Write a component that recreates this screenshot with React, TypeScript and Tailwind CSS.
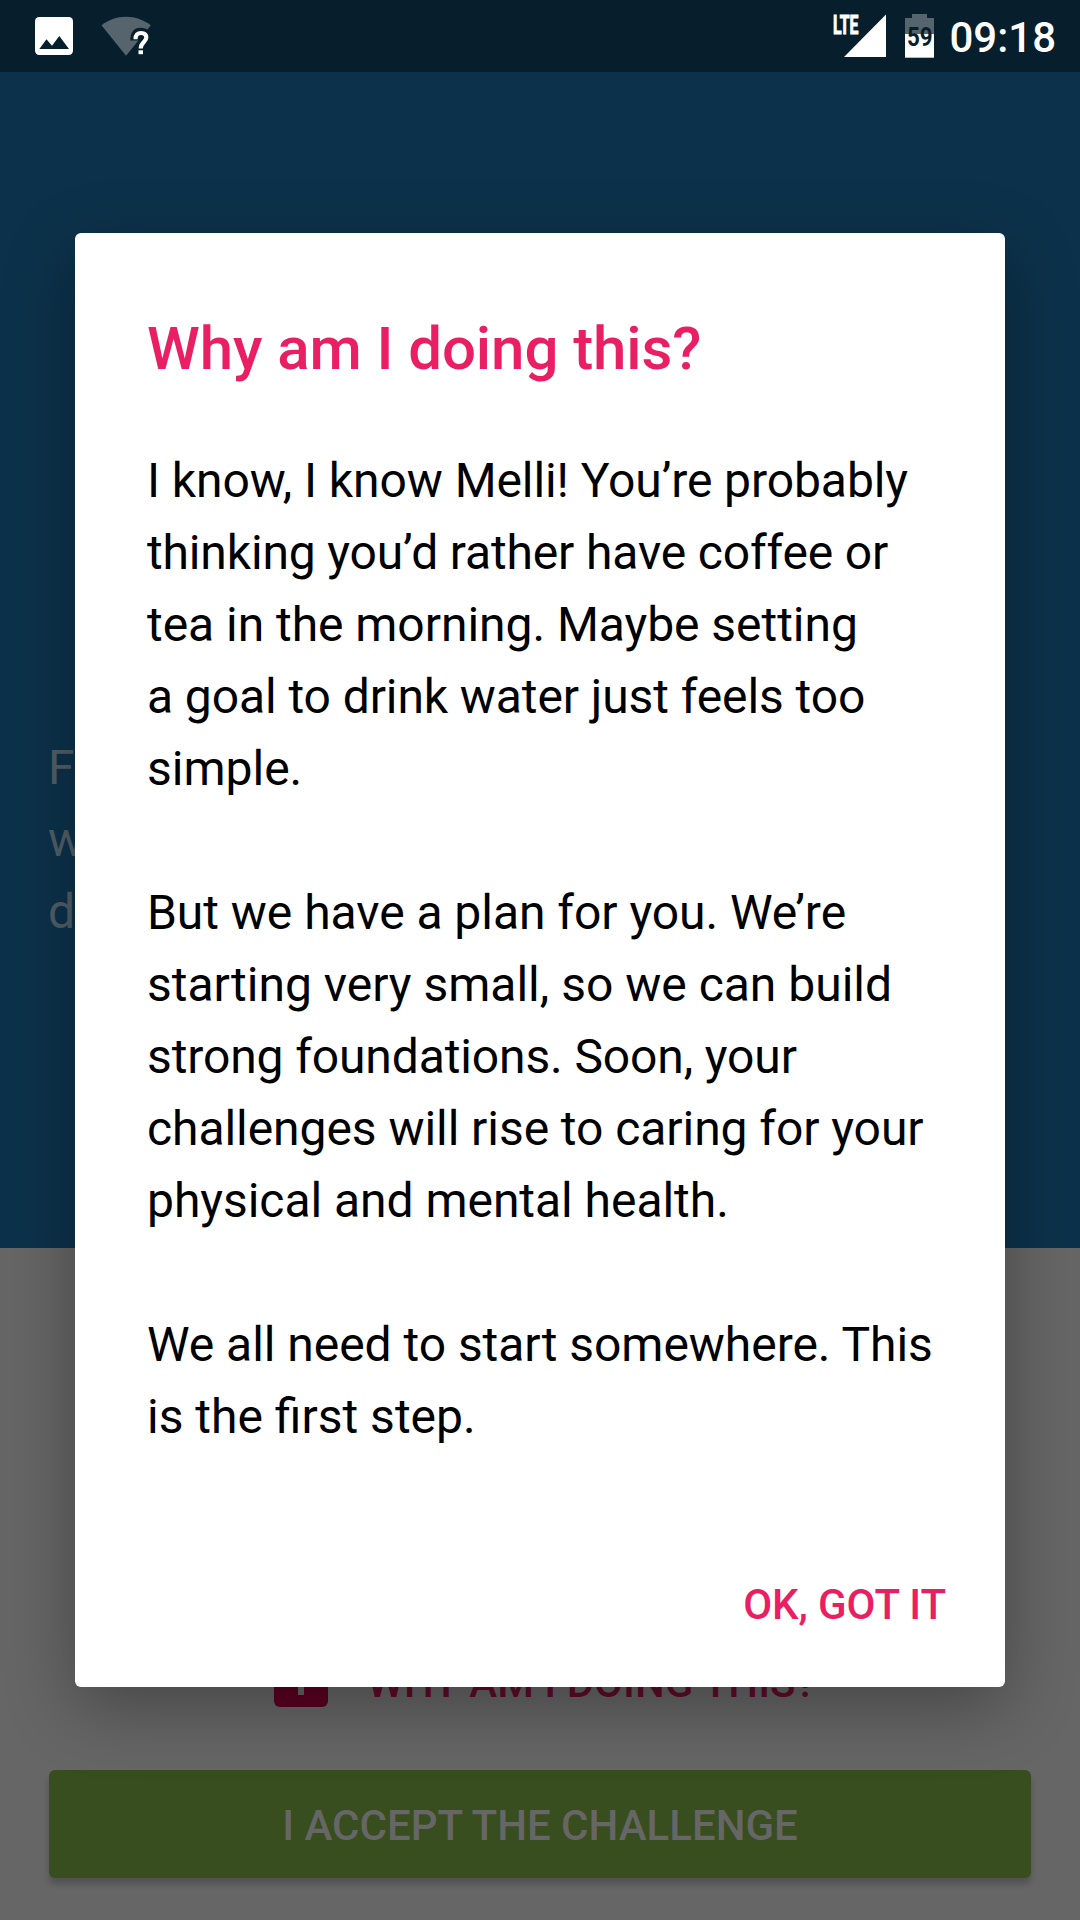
import React from "react";

function StatusBar() {
  return (
    <header className="flex h-[72px] shrink-0 items-start bg-[#071f2c] pl-[35px] text-white">
      <svg className="mt-[17px] h-[38px] w-[38px]" viewBox="0 0 38 38">
        <rect width="38" height="38" rx="4.2" fill="#fff" />
        <path d="M4.3 32 11.5 22.2 17 28.7 24.3 19 34 32Z" fill="#071f2c" />
      </svg>
      <svg className="ml-[28px] mt-[16px] h-[40px] w-[52px]" viewBox="0 0 52 40">
        <path d="M.5 9.3C7.5 4 15.500 .8 25 .8S42.500 4 49.800 9.300L25 39.700Z" fill="#55646d" />
        <path d="M34.300 24.500C34.300 18.500 36.500 16.800 40 16.800C44 16.800 45.400 18.600 45.400 21.300C45.400 27 39.800 26.500 39.800 32.500M39.800 34V38" fill="none" stroke="#071f2c" strokeWidth="10" />
        <path d="M34.500 23.200C34.500 19 36.700 17 40 17C43.700 17 45.300 19 45.300 21.600C45.300 26 39.700 26.300 39.700 32.500" fill="none" stroke="#fff" strokeWidth="4.200" />
        <path d="M37.500 34.300H42V38.200H37.500Z" fill="#fff" />
      </svg>
      <div className="ml-auto mr-[24px] flex items-start">
        <div className="relative mt-[14px] h-[44px] w-[54px]">
          <svg className="h-[44px] w-[54px]" viewBox="0 0 54 44">
            <path d="M12 43 54 .5V43Z" fill="#fff" />
          </svg>
          <span className="absolute left-[1px] top-[1px] origin-left scale-x-[0.62] text-[25.500px] font-bold leading-[20px] [-webkit-text-stroke:1px_white]">LTE</span>
        </div>
        <div className="relative ml-[19px] mt-[14px] h-[44px] w-[29px]">
          <svg className="h-[44px] w-[29px]" viewBox="0 0 29 44">
            <path d="M0 4H7V0H22V4H29V20H0Z" fill="#55646d" />
            <path d="M0 20H29V43.700H0Z" fill="#fff" />
          </svg>
          <span className="absolute left-[2px] top-[13px] origin-left scale-x-[0.860] text-[26px] font-bold leading-[20px] text-[#071f2c]">59</span>
        </div>
        <span className="ml-[15px] mt-[14px] text-[42px] font-medium leading-[48px]">09:18</span>
      </div>
    </header>
  );
}

function Dialog() {
  return (
    <section
      role="dialog"
      className="absolute left-[75px] top-[233px] flex h-[1454px] w-[930px] flex-col rounded-[6px] bg-white pl-[72px] shadow-[0_20px_70px_rgba(0,0,0,0.32)]"
    >
      <h1 className="mt-[80px] text-[60px] font-medium leading-[72px] tracking-[-0.08px] text-[#e91e63]">Why am I doing this?</h1>
      <div className="mt-[60px] flex flex-col gap-[72px] whitespace-nowrap text-[48px] leading-[72px] text-black">
        <p className="flex flex-col">
          <span className="tracking-[-0.08px]">I know, I know Melli! You’re probably</span>
          <span className="tracking-[-0.15px]">thinking you’d rather have coffee or</span>
          <span className="tracking-[-0.04px]">tea in the morning. Maybe setting</span>
          <span className="tracking-[-0.09px]">a goal to drink water just feels too</span>
          <span>simple.</span>
        </p>
        <p className="flex flex-col">
          <span className="tracking-[-0.04px]">But we have a plan for you. We’re</span>
          <span>starting very small, so we can build</span>
          <span className="tracking-[-0.12px]">strong foundations. Soon, your</span>
          <span className="tracking-[-0.06px]">challenges will rise to caring for your</span>
          <span className="tracking-[-0.04px]">physical and mental health.</span>
        </p>
        <p className="flex flex-col">
          <span className="tracking-[-0.04px]">We all need to start somewhere. This</span>
          <span>is the first step.</span>
        </p>
      </div>
      <button className="mb-[58px] mr-[59px] mt-auto self-end text-[42px] font-medium leading-[48px] tracking-[-0.1px] text-[#e91e63]">
        OK, GOT IT
      </button>
    </section>
  );
}

export default function App() {
  return (
    <div className="relative flex h-[1920px] w-[1080px] flex-col overflow-hidden bg-[#666666] font-['Roboto',sans-serif]">
      <StatusBar />
      <div className="h-[1176px] shrink-0 bg-[#0c324b] pl-[48px] pt-[660px] text-[48px] leading-[72px] text-[#515f68]">
        <p>
          For<br />
          we<br />
          dr
        </p>
      </div>
      <div className="mt-[405px] flex h-[54px] items-center pl-[274px]">
        <svg className="h-[54px] w-[54px]" viewBox="0 0 54 54">
          <rect width="54" height="54" rx="6" fill="#5c0022" />
          <path d="M24 42V12H30V42Z" fill="#666" />
        </svg>
        <span className="ml-[39px] mt-[5px] text-[42px] font-medium leading-[48px] text-[#5d0c28]">WHY AM I DOING THIS?</span>
      </div>
      <button className="mx-[49px] mt-[63px] h-[108px] shrink-0 rounded-[6px] bg-[#384e1e] pt-[3px] text-[42px] font-medium leading-[48px] text-[#666666] shadow-[0_6px_6px_rgba(0,0,0,0.2)]">
        I ACCEPT THE CHALLENGE
      </button>
      <Dialog />
    </div>
  );
}
